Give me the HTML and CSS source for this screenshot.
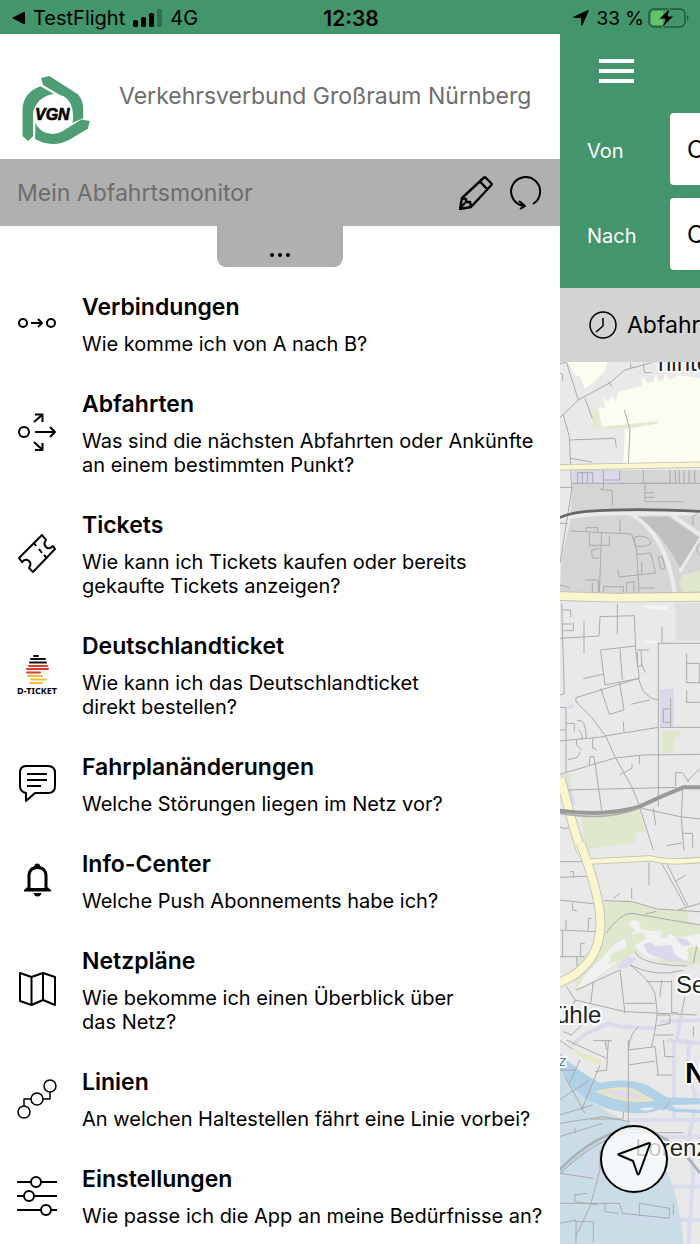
FILE: index.html
```
<!DOCTYPE html>
<html lang="de">
<head>
<meta charset="utf-8">
<meta name="viewport" content="width=device-width, initial-scale=1">
<title>VGN</title>
<link rel="stylesheet" href="styles.css">
</head>
<body>
<div class="app">
  <header class="status">
    <div class="status-left">
      <svg width="13" height="14" viewBox="0 0 13 14"><path d="M0 7 11.5 1q1.500-.5 1.500 1v10q0 1.500-1.500 1z"/></svg>
      <span>TestFlight</span>
      <svg width="29" height="18" viewBox="0 0 29 18"><rect y="11" width="5" height="7" rx="1.500"/><rect x="8" y="8" width="5" height="10" rx="1.500"/><rect x="16" y="4" width="5" height="14" rx="1.500"/><rect x="24" y="0" width="5" height="18" rx="1.500" opacity=".25"/></svg>
      <span>4G</span>
    </div>
    <strong class="status-time">12:38</strong>
    <div class="status-right">
      <svg width="16" height="16" viewBox="0 0 16 16"><path d="M15 0q1 0 .7 1L9.500 15q-1 1.600-1.400 0L8 8 1 7.700q-1.600-.4 0-1.200z"/></svg>
      <span>33 %</span>
      <svg width="42" height="22" viewBox="0 0 42 22"><rect x="1" y="2" width="36" height="18" rx="5" fill="none" stroke="#26573f" stroke-width="1.500"/><path d="M39 8q3 3 0 6z" fill="#26573f"/><path d="M6 4h9v14H6q-3 0-3-3V7q0-3 3-3z" fill="#65c466"/><path d="M22 1 11 12h6l-3 9 12-12h-6z" stroke="#43956b" stroke-width="1"/></svg>
    </div>
  </header>

  <nav class="drawer">
    <div class="brand">
      <svg class="logo" width="68" height="68" viewBox="66 227 204 205">
        <g fill="#4f9e73">
          <path d="M123 233 148 227 235 283Q250 302 250 325V354L218 368Q222 336 213 313Q204 290 180 284L129 254z"/>
          <path d="M121 258 162 281Q112 288 99 336V409L84 423 67 408V327Q69 277 121 258z"/>
          <path d="M106 368Q118 400 158 402Q178 400 190 392L244 358 270 363 264 386 208 419Q157 446 105 417z"/>
        </g>
        <text x="157" y="359" class="logo-text" text-anchor="middle">VGN</text>
      </svg>
      <h1>Verkehrsverbund Großraum Nürnberg</h1>
    </div>

    <section class="monitor">
      <h2>Mein Abfahrtsmonitor</h2>
      <button type="button" aria-label="Bearbeiten">
        <svg width="34" height="34" viewBox="0 0 34 34" class="line pencil"><path d="M1 33 3 22 25 1.500Q26 1 27 2L32.500 7.500Q33 8.500 32 9.500L12 31zM21 5.500l7.500 8M3 22l4 1v3l4 0 1 5M1 32l5-5"/></svg>
      </button>
      <button type="button" aria-label="Aktualisieren">
        <svg width="32" height="34" viewBox="0 0 32 34" class="line"><path d="M23 28A14.500 14.500 0 1 0 15 30M9 25l6 5-5 3"/></svg>
      </button>
    </section>
    <button type="button" class="handle" aria-label="Mehr"><i></i><i></i><i></i></button>

    <ul class="menu">
      <li><a href="#verbindungen">
        <svg viewBox="0 0 40 40" class="line"><circle cx="6" cy="19" r="4"/><circle cx="34" cy="19" r="4"/><path d="M14 19h11M21 15l4 4-4 4"/></svg>
        <span><b>Verbindungen</b><span>Wie komme ich von A nach B?</span></span></a></li>
      <li><a href="#abfahrten">
        <svg viewBox="0 0 40 40" class="line"><circle cx="7" cy="19" r="5"/><path d="M18 19h20M33 14l5 5-5 5M17 9l8-7M18 1.500h7.500V9M17 29l8 7.500M18 37h7.500v-7"/></svg>
        <span><b>Abfahrten</b><span>Was sind die nächsten Abfahrten oder Ankünfte<br>an einem bestimmten Punkt?</span></span></a></li>
      <li><a href="#tickets">
        <svg viewBox="0 0 40 40" class="line"><path d="M2 24 25 1l4 5q-3 4 0 7t7-1l2 3L16 38l-4-4q3-4 0-7t-7 1z"/><path d="M17 9l2 3M22 15l3 4M27 21l3 3"/></svg>
        <span><b>Tickets</b><span>Wie kann ich Tickets kaufen oder bereits<br>gekaufte Tickets anzeigen?</span></span></a></li>
      <li><a href="#deutschlandticket">
        <svg viewBox="0 0 40 40" class="flag"><path d="M17 1h4M14 4h14M13 7.500h16" stroke="#111"/><path d="M12 11h18M10 14h21M10 17.500h13" stroke="#dc3b2d"/><path d="M11 21h14M14 24.500h15M13 28h12" stroke="#f2bd3a"/><text x="20" y="39" text-anchor="middle">D-TICKET</text></svg>
        <span><b>Deutschlandticket</b><span>Wie kann ich das Deutschlandticket<br>direkt bestellen?</span></span></a></li>
      <li><a href="#fahrplanaenderungen">
        <svg viewBox="0 0 40 40" class="line"><path d="M9 2h22q7 0 7 7v13q0 7-7 7H18L9 37v-8q-6-1-6-7V9q0-7 6-7z"/><path d="M10 10h20M10 16h20M10 22h14"/></svg>
        <span><b>Fahrplanänderungen</b><span>Welche Störungen liegen im Netz vor?</span></span></a></li>
      <li><a href="#info-center">
        <svg viewBox="0 0 40 40"><path d="M17.500 5q0-2.500 2.800-2.500T23 5Q30 7 30.500 14v12l3.500 3v1.500H7V29l3.500-3V14Q11 7 17.500 5zM13.500 27h14V14q-.5-6-7-6t-7 6z" fill-rule="evenodd"/><path d="M16.500 32h8q-1 3.500-4 3.500t-4-3.500z"/></svg>
        <span><b>Info-Center</b><span>Welche Push Abonnements habe ich?</span></span></a></li>
      <li><a href="#netzplaene">
        <svg viewBox="0 0 40 40" class="line"><path d="M3 3 14.500 7 26 3l12 4v28l-12-5-11.500 5L3 31zM14.500 7v28M26 3v27"/></svg>
        <span><b>Netzpläne</b><span>Wie bekomme ich einen Überblick über<br>das Netz?</span></span></a></li>
      <li><a href="#linien">
        <svg viewBox="0 0 40 40" class="line thin"><circle cx="7" cy="33" r="6"/><circle cx="20" cy="20" r="6"/><circle cx="33" cy="7" r="6"/><path d="M7 27v-7h7M26 20h7v-7"/></svg>
        <span><b>Linien</b><span>An welchen Haltestellen fährt eine Linie vorbei?</span></span></a></li>
      <li><a href="#einstellungen">
        <svg viewBox="0 0 40 40" class="line"><path d="M0 6h14M24 6h16M0 20h7M17 20h23M0 34h24M34 34h6"/><circle cx="19" cy="6" r="5"/><circle cx="12" cy="20" r="5"/><circle cx="29" cy="34" r="5"/></svg>
        <span><b>Einstellungen</b><span>Wie passe ich die App an meine Bedürfnisse an?</span></span></a></li>
    </ul>
  </nav>

  <main class="page">
    <form class="search">
      <button type="button" class="burger" aria-label="Menü"><i></i><i></i><i></i></button>
      <div class="field"><label for="von">Von</label><input id="von" type="text" value="O"></div>
      <div class="field"><label for="nach">Nach</label><input id="nach" type="text" value="O"></div>
    </form>
    <button type="button" class="departure">
      <svg width="28" height="28" viewBox="0 0 28 28" class="line thin"><circle cx="14" cy="14" r="13"/><path d="M14 7v8l-7 6"/></svg>
      <span>Abfahrt</span>
    </button>
    <div class="map">
      <svg class="map-art" viewBox="560 362 140 882" preserveAspectRatio="xMinYMin slice">
        <rect x="560" y="362" width="600" height="882" fill="#e9e9e9"/>
        <!-- fields and rail yard -->
        <g transform="translate(550 350) scale(.33333)">
          <path d="M50 30H175L160 70 105 118 90 80 70 70zM145 170 165 175 160 140 175 155 185 135 195 155 205 125 275 108 280 80 290 100 310 95 318 70 325 95 340 90 345 70 360 90 385 75 450 85V340H220L225 230H155z" fill="#fdfcf1"/>
          <path d="M122 172 145 184 153 230 320 214 322 221 230 236 130 234z" fill="#e1e9cf"/>
          <path d="M70 360H450V735H30L35 620 60 520z" fill="#d5d5d5"/>
          <path d="M72 362H210V398H72z" fill="#d8d8ea"/>
          <path d="M28 510Q90 488 240 490T450 490M240 490Q350 550 375 735M360 490 450 555 390 665" class="road-white"/>
          <path d="M265 500 355 500 448 562 390 655Q345 560 265 500z" fill="#c0c0c0"/>
          <path d="M395 675 450 662V725H400L388 700z" fill="#dfe7cd"/>
          <path d="M50 38 85 150 28 205M85 150 180 98 225 60 305 38M105 145 127 206M175 95l12 15M242 38v14h15M280 40l3 28h22M28 42l20-5M28 70l10 3v20M40 195 58 260 65 420 30 640M58 270 195 265 199 292M223 180 240 240 235 340M28 412h40M62 325 125 336M65 400H450M160 360v54l-8 4 35 4v45M83 400v-32h45v32M97 368v32M112 368v32M163 390h46v-28M280 360v40h80v-40M285 403v52H400M285 428h27M285 442h30M376 362v37M388 362v37M402 362v37M417 362v37M434 362v37M60 543 245 552 260 600 267 728M155 548 148 728M118 548v38h60v-28M108 543v-10h35v10M210 508v40M252 562Q290 550 305 578 280 595 256 588zM260 614l42-5 15 60-110 12-4-22M275 638v32M325 622l12-2 8 35-12 3zM147 596l-22 4 2 24h20M105 690h40v38M127 698v30M160 710h60v18M160 728v-18M230 728v-30l22-3v30M265 714h50M445 490l-16 8v28M450 580q-20 15 0 35M28 520h25M28 705l30 8" class="street"/>
          <path d="M28 352 180 349 450 344" class="main-edge narrow"/><path d="M28 352 180 349 450 344" class="main narrow"/>
          <path d="M28 503Q60 489 110 484Q250 474 450 484" stroke="#666" stroke-width="8" fill="none"/>
          <path d="M20 738 200 743 450 740" class="main-edge"/><path d="M20 738 200 743 450 740" class="main"/>
        </g>
        <!-- residential blocks -->
        <g transform="translate(550 600) scale(.33333)">
          <path d="M375 10h75v112h-75z" fill="#dfdfdf"/><path d="M275 15l80 3-6 12-55-4zM284 122h38v7h-36z" fill="#f4f4f4"/>
          <path d="M330 267h42v115h-42zM55 315l16-3-2 12-14 2zM55 570l10 2 14 45-14-8z" fill="#d9d9eb"/>
          <path d="M334 392h57v17l-18 6-6 44h-33zM95 650 268 630 285 694 255 700 258 727 100 750zM30 525l30-5 5 50H48z" fill="#dfe7cd"/>
          <path d="M35 10 43 280 30 285M37 30h25v22M35 72h30M40 92h30v-24M30 115 147 108 150 50 253 47 257 150 268 235 165 255 152 150 257 138M102 62v98M202 12v90M210 145l7 95M100 236l62-14M78 293 265 235 280 275 305 295 325 300M78 293Q75 300 82 310L125 352 168 410 195 470 245 560 262 600 310 750M152 265 178 343 222 330 208 245M242 313 300 300M262 150h35M262 155v45l14-3-3-45M274 190l12 28M336 80v48M325 382V130H450M325 382V620M330 382H450M410 160v88h40M410 190h38v60M410 270v37h40M362 295v85M362 327h-22v40h22M165 408 325 382M28 423 165 410M222 398l-2-33M28 322h20v195M48 370h25v25M28 390h20M52 480l30-8 8-16M30 523 195 474 280 465 450 463M135 488 155 630M118 495l2-25h12l3 25M85 390q15 8 10 28M82 362q25-10 27 52M80 420q-5 20 15 28M128 414v30l12 5M208 525l38-20v-12M268 468v24M48 570 380 562M377 558v-40h20l20 28M410 545 450 505M275 625 390 650 450 657M310 625l7 50M398 570 394 655 402 750M400 700h28v45M350 737l45-8M28 680q20 10 30 0" class="street"/>
          <path d="M32 535Q60 650 95 760" class="main-edge"/><path d="M32 535Q60 650 95 760" class="main"/>
          <path d="M28 632Q170 650 268 620 330 590 400 562H460" stroke="#999" stroke-width="12" fill="none"/>
          <path d="M28 640Q170 665 268 624" stroke="#aaa" stroke-width="5" fill="none"/>
        </g>
        <!-- park and old town -->
        <g transform="translate(550 850) scale(.33333)">
          <path d="M162 160 230 150 320 180 410 182 420 220 450 230V340L415 345 340 340 255 305 220 330 100 415 75 425 80 330 160 280z" fill="#dfe7cd"/>
          <path d="M232 218 255 210 272 220 270 235 300 243 330 240 350 250 385 262 450 252V290L420 300 412 330 300 325 262 300 250 275 225 300 200 340 100 412 80 415 110 370 160 320 185 290 228 262 240 262 255 240z" fill="#f1f1f1"/>
          <path d="M225 262l50-15 15 20-35 18-20 35-60 22 10-30 45-20zM335 245l20 0-5 18-18-2zM412 295l30-10-5 40-22 5z" fill="#dfe7cd"/>
          <path d="M375 262l33 5 20 18-30 3zM280 282l25-5 10 12 50-5 8 28 45 28-75-10-50-20zM230 320l30 5-35 32-25-2z" fill="#d9d9eb"/>
          <path d="M65 585 110 550 180 520 210 530 320 535M330 515 450 510M395 490l-15 80 70 10M350 570l80 10" stroke="#d9d9eb" stroke-width="11" fill="none"/>
          <path d="M28 82 130 78M60 65h10v18M28 35h90M28 150l110 12M68 158v22l14 2M28 240l110 5M48 238v-28M115 240v-35h10M38 242v78M28 320h75M92 318v-38h12M80 320l2 35M162 152l85 3 75 22 128 8M190 145l20-15M245 115v30M297 38v68M335 40 408 172M350 40 415 170M375 95l32-20M385 180 450 160M168 250Q210 190 245 190L450 225M285 192l35-8M255 305Q270 345 410 348M240 345Q300 390 315 430L322 490 315 540 305 590M240 345Q320 385 400 360M80 420 210 360 225 490M75 450 225 485 440 495M50 410l25 40-8 25M130 395l-8 65M225 460H315M330 440l5-50M365 390v98h20M405 440l-10 50M290 395l75 0M320 495h40v25l-40 8M315 555h55M235 600Q240 550 265 530M40 545 65 555 100 520 110 490M28 570l40 28M130 572h55M165 572l5 28M440 290l-10 50M430 530v30" class="street"/>
          <path d="M92-20Q140 110 150 190 158 280 115 335 80 380 20 400" class="main-edge"/>
          <path d="M115 35 300 25Q350 40 450 30" class="main-edge narrow"/><path d="M115 35 300 25Q350 40 450 30" class="main narrow"/>
          <path d="M92-20Q140 110 150 190 158 280 115 335 80 380 20 400" class="main"/>
        </g>
        <!-- river and historic centre -->
        <g transform="translate(550 1040) scale(.33333)">
          <path d="M230 246Q300 290 340 370 390 470 400 612H28V85L130 190z" fill="#cadde6"/>
          <path d="M372 0V240M420 0 410 80 440 180 415 300 430 400 415 612M240 240H450M300 290H450M340 440H450M100 260l20 120 150 15M30 400l320 15M210 540H360M220 540V612M390 540H450" stroke="#d5d8ee" stroke-width="12" fill="none" opacity=".8"/>
          <path d="M28 38Q90 100 150 128 245 110 300 140L350 172 450 175V220L370 215Q340 200 310 215 260 228 190 210 120 195 60 135L28 85z" fill="#b0d1e8"/>
          <path d="M145 155Q210 140 245 148L305 180Q220 190 145 155z" fill="#dedbe7" stroke="#e9e7b8" stroke-width="7"/>
          <path d="M265 208q30-10 50-4-20 12-50 4zM365 195l85-2v16l-75-4z" fill="#e9e9e9"/>
          <path d="M68 28 155 62 145 72 110 62z" fill="#e9e7c0"/>
          <path d="M50 0q20 10 120 55M175 0l-5 90-35 5M235 0v250M235 30l80-10 10 85M340 0l5 50h25M235 75l80-12M318 105h50M28 90h50M90 60 60 125M150 75 95 210M28 180l90-60M28 250 160 230 240 245M28 225l100-30M45 110l60 110M28 290l130-40M75 265v15M150 330v60L120 500 75 595M30 400l100 15M75 465l35-5M75 460v25l70 10M28 490l180 0 10 30 140 15v-30l-90-15v38M28 550l50-10v72M75 545h55v60M165 490v25l40 5M370 490v35M240 278H400M340 210l20-25M220 215v22H120" class="street"/>
          <path d="M28 390Q130 285 240 265 360 270 450 400" stroke="#aab3b8" stroke-width="8" fill="none"/>
          <path d="M28 402Q135 297 240 277" stroke="#aab3b8" stroke-width="4" fill="none"/>
        </g>
        <g class="map-label">
          <text x="658" y="371">hinte</text><text x="676" y="993">Se</text><text x="556" y="1023">ühle</text><text x="635" y="1156">Lorenz</text>
          <text x="685" y="1083" class="map-city">N</text><text x="559" y="1066" class="map-water">z</text>
        </g>
      </svg>
      <button type="button" class="locate" aria-label="Standort">
        <svg width="34" height="34" viewBox="0 0 34 34" class="line"><path d="M32 1Q33 1 33 2L22 32q-1 1-1.500 0L16 19 2 13q-1-.5 0-1z"/></svg>
      </button>
    </div>
  </main>
</div>
</body>
</html>
```
FILE: styles.css
```
* { box-sizing: border-box; }
body { margin: 0; font-family: Inter, "Liberation Sans", sans-serif; color: #000; background: #fff; }
button { border: 0; padding: 0; margin: 0; background: none; color: inherit; font: inherit; }
svg { display: block; flex: none; }
h1, h2 { margin: 0; font-weight: 400; color: #6d6d6d; }

.app { display: grid; grid-template-columns: 4fr 1fr; grid-template-rows: auto 1fr; min-height: 100vh; overflow: hidden; }
.status { grid-column: 1 / -1; display: grid; grid-template-columns: 1fr auto 1fr; align-items: center; height: 34px; padding: 2px 10px 0 12px; background: #43956b; font-size: 19px; }
.status-left, .status-right { display: flex; align-items: center; gap: 8px; }
.status-left { font-size: 20px; }
.status-right { justify-content: flex-end; }
.status-right svg:last-child { margin-left: -4px; }
.status-time { font-weight: 600; font-size: 21px; }

.drawer { min-width: 0; background: #fff; }
.brand { display: flex; height: 125px; padding: 42px 0 0 22px; gap: 29px; }
.brand h1 { padding-top: 5px; font-size: 23px; line-height: 30px; white-space: nowrap; }
.logo-text { font: italic 900 48px "Liberation Sans", sans-serif; stroke: #000; stroke-width: 2px; }
.monitor { display: flex; align-items: center; gap: 17px; height: 67px; padding: 0 18px 0 17px; background: #b0b0b0; }
.monitor h2 { flex: 1; font-size: 23px; line-height: 30px; }
.handle { display: flex; justify-content: center; align-items: flex-end; gap: 4px; width: 126px; height: 41px; margin: 0 auto; padding-bottom: 10px; background: #b0b0b0; border-radius: 0 0 9px 9px; }
.handle i { width: 4px; height: 4px; border-radius: 50%; background: #000; }

.line { fill: none; stroke: #000; stroke-width: 2; stroke-linejoin: round; }
.pencil { stroke-width: 2.4; }
.thin { stroke-width: 1.5; }
.menu { list-style: none; margin: 0; padding: 25px 0 0; }
.menu a { display: flex; align-items: center; gap: 25px; padding: 0 0 33px 17px; color: inherit; text-decoration: none; white-space: nowrap; }
.menu svg { width: 40px; height: 40px; overflow: visible; }
.menu a > span { display: flex; flex-direction: column; gap: 10px; }
.menu b { font-size: 23px; line-height: 30px; font-weight: 600; }
.menu a > span > span { font-size: 20px; line-height: 24px; }
.menu li:last-child a { padding-bottom: 0; }
.flag { stroke-width: 2; stroke-linecap: round; }
.flag text { font: 700 9px "Noto Sans", sans-serif; }

.page { display: flex; flex-direction: column; min-width: 0; overflow: hidden; }
.search { height: 254px; padding: 25px 0 0 27px; background: #43956b; }
.burger { display: flex; flex-direction: column; gap: 6px; width: 35px; margin: 0 0 30px 12px; }
.burger i { height: 4px; background: #fff; }
.field { display: grid; grid-template-columns: 83px 300px; align-items: center; margin-bottom: 13px; }
.field label { padding-top: 4px; color: #fff; font-size: 20px; }
.field input { width: 300px; height: 72px; padding: 0 17px; border: 0; border-radius: 4px; background: #fff; color: #000; font: 24px Inter, sans-serif; }
.departure { display: flex; align-items: center; gap: 10px; height: 74px; padding: 0 0 0 29px; background: #d3d3d3; font-size: 23px; }
.map { position: relative; flex: 1; min-height: 400px; overflow: hidden; background: #e9e9e9; }
.map-art { position: absolute; inset: 0; width: 100%; height: 100%; }
.street { fill: none; stroke: #aaa; stroke-width: 3; }
.road-white { fill: none; stroke: #ebebeb; stroke-width: 12; }
.main-edge { fill: none; stroke: #bdbdb5; stroke-width: 29; }
.main { fill: none; stroke: #faf6cd; stroke-width: 24; }
.main-edge.narrow { stroke-width: 19; }
.main.narrow { stroke-width: 14; }
.map-label { font: 24px "Liberation Sans", sans-serif; fill: #222; stroke: #fff; stroke-width: 4; stroke-linejoin: round; paint-order: stroke; }
.map-city { font-weight: 700; font-size: 30px; fill: #000; }
.map-water { font: italic 14px "Liberation Sans", sans-serif; fill: #4b79b5; }
.locate { position: absolute; left: 40px; bottom: 51px; display: grid; place-items: center; width: 68px; height: 68px; border: 2px solid #000; border-radius: 50%; background: rgba(255, 255, 255, .75); }
```
